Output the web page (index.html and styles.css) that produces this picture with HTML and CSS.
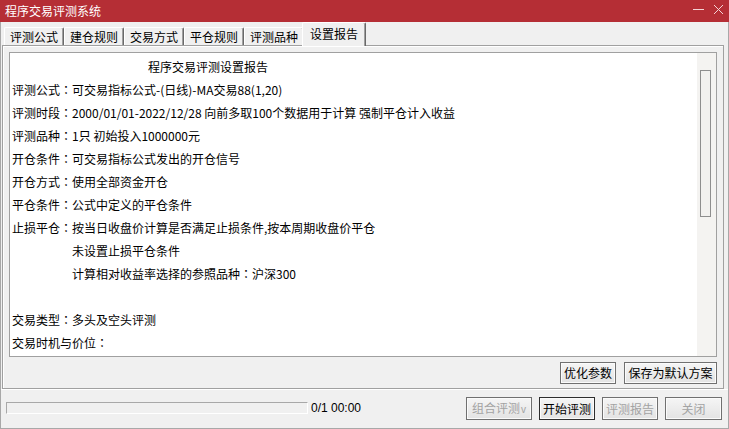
FILE: index.html
```html
<!DOCTYPE html>
<html lang="zh-CN">
<head>
  <meta charset="UTF-8">
  <meta name="viewport" content="width=device-width, initial-scale=1.0">
  <title>程序交易评测系统</title>
  <link rel="stylesheet" href="styles.css">
</head>
<body>
  <div class="titlebar">
    <span class="title">程序交易评测系统</span>
    <svg class="controls" width="36" height="22" viewBox="0 0 36 22">
      <path d="M3 9.5h11" stroke="#f4d3d5" stroke-width="1"/>
      <path d="M24 5l9 9M33 5l-9 9" stroke="#f4d3d5" stroke-width="1"/>
    </svg>
  </div>

  <div class="frame">
    <div class="tabs">
      <div class="tab">评测公式</div>
      <div class="tab">建仓规则</div>
      <div class="tab">交易方式</div>
      <div class="tab">平仓规则</div>
      <div class="tab">评测品种</div>
      <div class="tab active">设置报告</div>
    </div>

    <div class="panel">
      <div class="report">
        <div class="report-text">
          <div class="line heading">程序交易评测设置报告</div>
          <div class="line">评测公式<span class="colon" lang="zh-TW">：</span>可交易指标公式-(日线)-MA交易88(1,20)</div>
          <div class="line">评测时段<span class="colon" lang="zh-TW">：</span>2000/01/01-2022/12/28 向前多取100个数据用于计算 强制平仓计入收益</div>
          <div class="line">评测品种<span class="colon" lang="zh-TW">：</span>1只 初始投入1000000元</div>
          <div class="line">开仓条件<span class="colon" lang="zh-TW">：</span>可交易指标公式发出的开仓信号</div>
          <div class="line">开仓方式<span class="colon" lang="zh-TW">：</span>使用全部资金开仓</div>
          <div class="line">平仓条件<span class="colon" lang="zh-TW">：</span>公式中定义的平仓条件</div>
          <div class="line">止损平仓<span class="colon" lang="zh-TW">：</span>按当日收盘价计算是否满足止损条件,按本周期收盘价平仓</div>
          <div class="line indent">未设置止损平仓条件</div>
          <div class="line indent">计算相对收益率选择的参照品种<span class="colon" lang="zh-TW">：</span>沪深300</div>
          <div class="line"></div>
          <div class="line">交易类型<span class="colon" lang="zh-TW">：</span>多头及空头评测</div>
          <div class="line">交易时机与价位<span class="colon" lang="zh-TW">：</span></div>
        </div>
        <div class="scrollbar"><div class="thumb"></div></div>
      </div>
      <div class="panel-actions">
        <button class="btn w56">优化参数</button>
        <button class="btn w93">保存为默认方案</button>
      </div>
    </div>

    <div class="footer">
      <div class="progress"></div>
      <span class="counter">0/1 00:00</span>
      <div class="footer-actions">
        <button class="btn w66" disabled>组合评测<span class="caret">v</span></button>
        <button class="btn w56 default">开始评测</button>
        <button class="btn w56" disabled>评测报告</button>
        <button class="btn w57" disabled>关闭</button>
      </div>
    </div>
  </div>
</body>
</html>
```

FILE: styles.css
```css
body {
  margin: 0;
  width: 729px;
  height: 429px;
  background: #f0f0f0;
  font-family: "Noto Sans CJK SC", "Microsoft YaHei", sans-serif;
  font-size: 12px;
  color: #000;
  overflow: hidden;
}
.titlebar {
  height: 22px;
  background: #b52e35;
  display: flex;
  align-items: center;
  padding-left: 5px;
}
.title {
  color: #fff;
  line-height: 22px;
}
.controls {
  margin-left: auto;
  margin-right: 3px;
  display: block;
}
.frame {
  height: 407px;
  box-sizing: border-box;
  border: 1px solid #a8a8a8;
  border-top: none;
}
.tabs {
  height: 23px;
  display: flex;
  align-items: flex-end;
  padding-left: 3px;
}
.tab {
  position: relative;
  width: 60px;
  height: 18px;
  box-sizing: border-box;
  border-top: 1px solid #fff;
  border-left: 1px solid #fff;
  border-right: 1px solid #696969;
  border-radius: 2px 2px 0 0;
  box-shadow: inset -1px 0 0 #a0a0a0;
  text-align: center;
  line-height: 18px;
}
.tab.active {
  width: 64px;
  height: 24px;
  margin: 0 -2px -1px -2px;
  background: #f0f0f0;
  z-index: 1;
  line-height: 22px;
}
.panel {
  height: 344px;
  box-sizing: border-box;
  margin: 0 4px 0 1px;
  border: 1px solid #a0a0a0;
  box-shadow: inset 1px 1px 0 #fff;
  padding: 6px 6px 0 6px;
}
.report {
  height: 305px;
  box-sizing: border-box;
  border: 1px solid #a0a0a0;
  background: #fff;
  display: flex;
}
.report-text {
  flex: 1;
  padding: 2px 0 0 2px;
}
.line {
  height: 23px;
  line-height: 23px;
  white-space: nowrap;
}
/* centred full-width colon, as in the Windows UI font */
.colon {
  font-family: "Noto Sans CJK TC", "Noto Sans CJK SC", sans-serif;
}
.heading {
  padding-left: 136px;
}
.indent {
  padding-left: 60px;
}
.scrollbar {
  width: 19px;
  background: #f4f3f1;
}
.thumb {
  width: 11px;
  height: 147px;
  box-sizing: border-box;
  margin: 17px 0 0 3px;
  border: 1px solid #8e8e8e;
  background: #f2f1ef;
}
.panel-actions {
  display: flex;
  justify-content: flex-end;
  gap: 8px;
  margin-top: 5px;
}
.btn {
  height: 22px;
  box-sizing: border-box;
  padding: 0;
  font-family: inherit;
  font-size: 12px;
  line-height: 20px;
  color: #000;
  border: 1px solid #707070;
  border-radius: 0;
  background: linear-gradient(#f5f5f5, #e3e3e3);
  box-shadow: inset 0 0 0 1px #fbfbfb;
}
.btn:disabled {
  color: #a3a3a3;
}
.btn.default {
  border-color: #2e2e2e;
}
.w56 { width: 56px; }
.w57 { width: 57px; }
.w66 { width: 66px; }
.w93 { width: 93px; }
.caret {
  font-family: "Liberation Sans", Arial, sans-serif;
  font-size: 10px;
  margin-left: 1px;
}
.footer {
  height: 39px;
  box-sizing: border-box;
  display: flex;
  align-items: flex-start;
  padding: 7px 6px 0 5px;
  border-top: 1px solid #fff;
}
.footer .btn {
  height: 23px;
}
.progress {
  width: 302px;
  height: 12px;
  box-sizing: border-box;
  margin-top: 5px;
  border: 1px solid #a8a8a8;
  border-right-color: #fff;
  border-bottom-color: #fff;
  background: #f0f0f0;
}
.counter {
  font-family: "Liberation Sans", Arial, sans-serif;
  font-size: 12px;
  line-height: 23px;
  margin-left: 3px;
}
.footer-actions {
  margin-left: auto;
  display: flex;
  gap: 7px;
}
```
